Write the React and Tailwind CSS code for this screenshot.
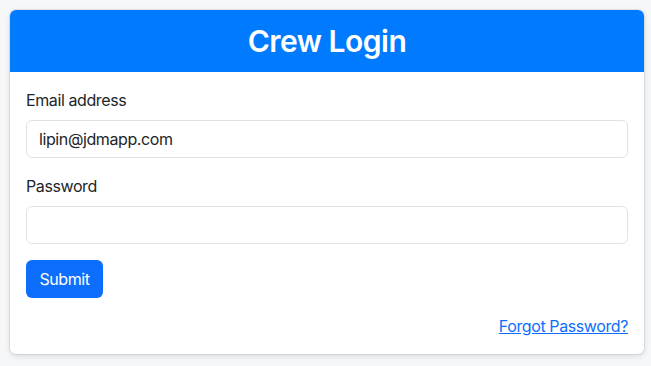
export default function App() {
  return (
    <div className="min-h-screen bg-[#f6f7f9] pt-[10px] pl-[10px] font-['Inter',sans-serif] tracking-[-0.4px] text-[#212529]">
      <div className="w-[634px] overflow-hidden rounded-md bg-white shadow-[0_0_0_1px_rgba(0,0,0,0.07),0_2px_6px_rgba(0,0,0,0.12)]">
        <div className="flex h-[62px] items-center justify-center bg-[#007bff]">
          <h1 className="text-[30px] font-semibold tracking-[-0.5px] text-white">Crew Login</h1>
        </div>
        <form className="px-4 pt-4 pb-4">
          <div className="mb-4">
            <label className="mb-2 block text-[16px] leading-6">Email address</label>
            <input
              type="email"
              defaultValue="lipin@jdmapp.com"
              className="block h-[38px] w-full rounded-md border border-[#dee2e6] px-3 text-[16px] tracking-[-0.4px] text-[#212529] outline-none"
            />
          </div>
          <div className="mb-4">
            <label className="mb-2 block text-[16px] leading-6">Password</label>
            <input
              type="password"
              className="block h-[38px] w-full rounded-md border border-[#dee2e6] px-3 text-[16px] outline-none"
            />
          </div>
          <button
            type="button"
            className="h-[38px] w-[77px] rounded-md bg-[#0d6efd] text-[16px] text-white"
          >
            Submit
          </button>
          <div className="mt-4 flex justify-end">
            <a href="#" className="text-[16px] leading-6 text-[#0d6efd] underline">
              Forgot Password?
            </a>
          </div>
        </form>
      </div>
    </div>
  );
}
